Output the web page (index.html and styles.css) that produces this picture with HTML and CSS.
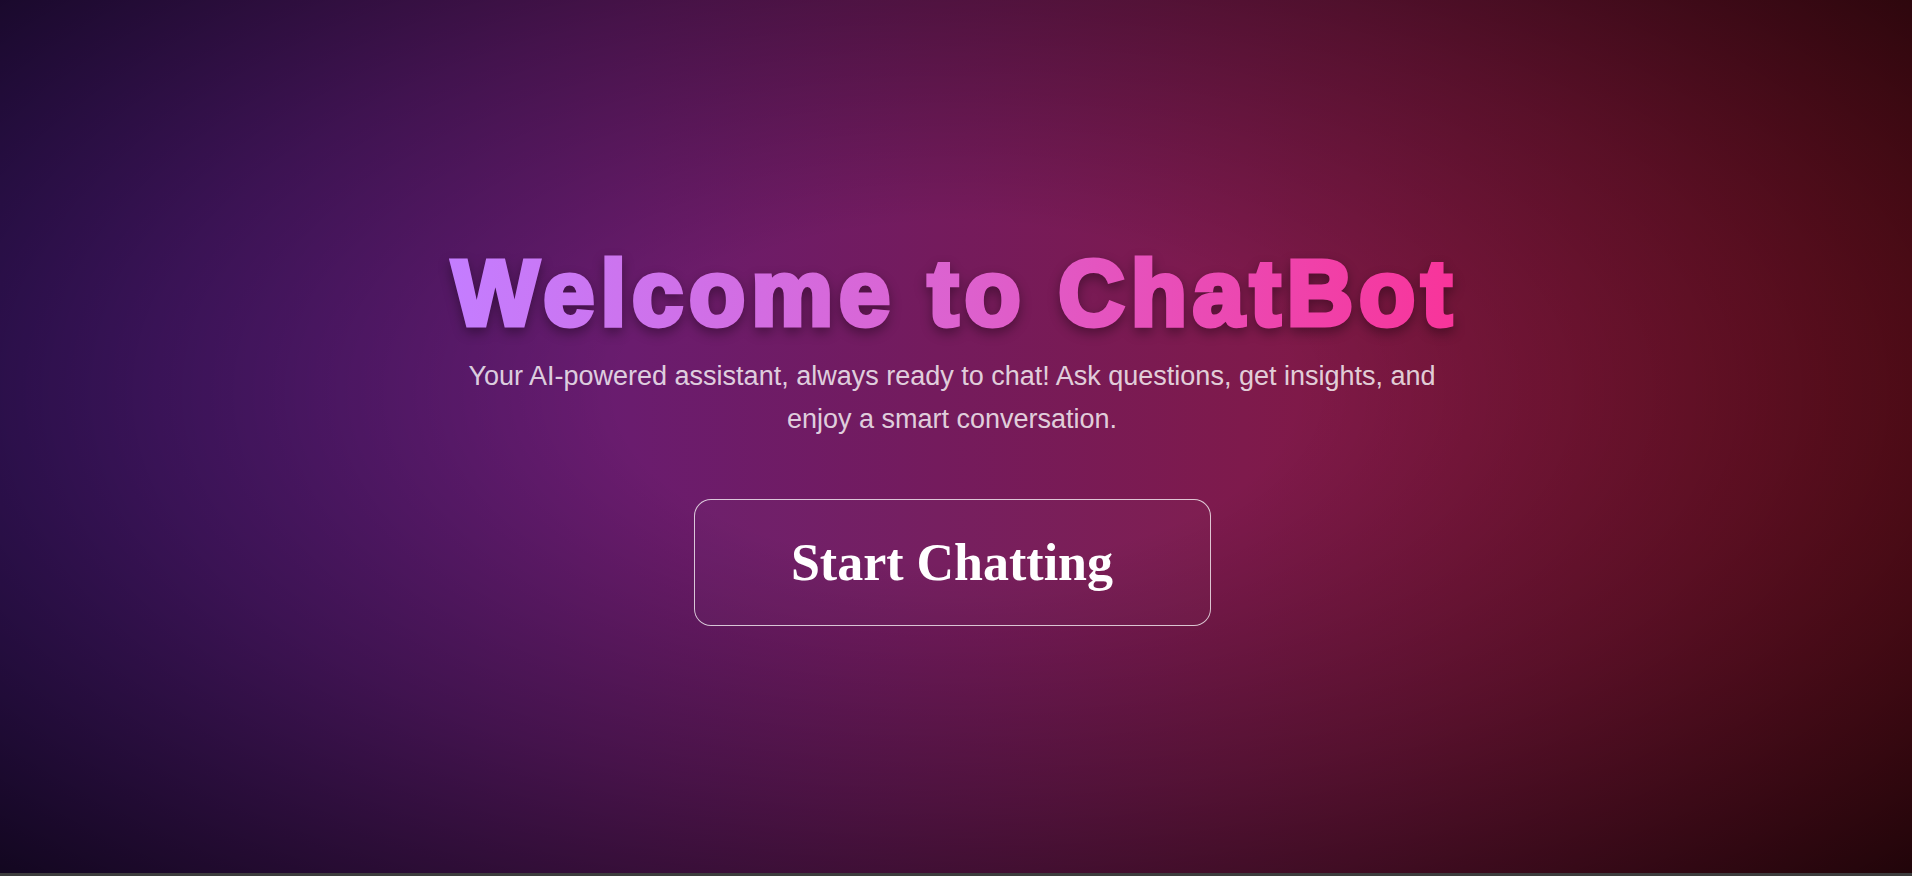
FILE: index.html
```html
<!DOCTYPE html>
<html lang="en">
<head>
<meta charset="utf-8">
<title>ChatBot</title>
<link rel="stylesheet" href="styles.css">
</head>
<body>
<main class="hero">
  <div class="hero-content">
    <h1 class="title">
      <svg class="title-svg" width="1060" height="110" viewBox="0 0 1060 110" role="img" aria-label="Welcome to ChatBot">
        <defs>
          <linearGradient id="titleGrad" gradientUnits="userSpaceOnUse" x1="27" y1="0" x2="1033" y2="0">
            <stop offset="0" stop-color="#c47dff"/>
            <stop offset="0.5" stop-color="#dc62cf"/>
            <stop offset="1" stop-color="#f8349a"/>
          </linearGradient>
        </defs>
        <text class="title-text" x="533" y="88" text-anchor="middle" fill="url(#titleGrad)" stroke="url(#titleGrad)">Welcome to ChatBot</text>
      </svg>
    </h1>
    <p class="subtitle">Your AI-powered assistant, always ready to chat! Ask questions, get insights, and enjoy a smart conversation.</p>
    <button class="cta">Start Chatting</button>
  </div>
</main>
</body>
</html>
```

FILE: styles.css
```css
* { box-sizing: border-box; }
html {
  background: #3d3d3d;
}
body {
  margin: 0;
  font-family: "Liberation Sans", Arial, sans-serif;
}
.hero {
  height: 873px;
  display: flex;
  align-items: center;
  justify-content: center;
  padding: 0 8px 10px 0;
  background:
    radial-gradient(ellipse at 50% 45%, rgba(0,0,0,0) 25%, rgba(0,0,0,0.33) 60%, rgba(0,0,0,0.76) 100%),
    linear-gradient(90deg, #4e1c86 0%, #6a1c6e 33%, #7e1a4c 65%, #8a1428 100%);
}
.hero-content {
  display: flex;
  flex-direction: column;
  align-items: center;
  text-align: center;
  max-width: 1000px;
}
.title {
  margin: 0;
  line-height: 0;
}
.title-svg {
  display: block;
  overflow: visible;
  filter: drop-shadow(0 5px 6px rgba(0,0,0,0.35));
}
.title-text {
  font-family: "Liberation Sans", Arial, sans-serif;
  font-weight: 700;
  font-size: 92px;
  letter-spacing: 6px;
  stroke-width: 5px;
  stroke-linejoin: miter;
  stroke-miterlimit: 3;
  paint-order: stroke fill;
}
.subtitle {
  margin: 8px 0 0;
  font-size: 27px;
  line-height: 1.6;
  color: rgba(255,255,255,0.8);
}
.cta {
  margin-top: 58px;
  width: 517px;
  height: 127px;
  border: 1px solid rgba(255,255,255,0.75);
  border-radius: 17px;
  background: rgba(255,255,255,0.02);
  color: #fff;
  font-family: "Liberation Serif", Georgia, serif;
  font-weight: 700;
  font-size: 52px;
  cursor: pointer;
}
```
